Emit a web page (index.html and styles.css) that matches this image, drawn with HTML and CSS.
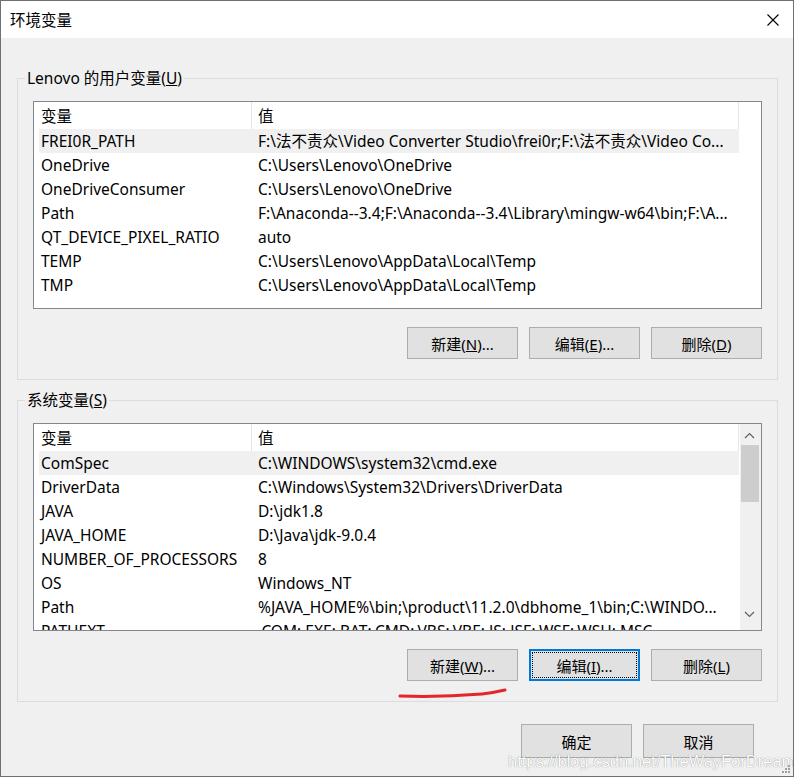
FILE: index.html
```html
<!DOCTYPE html>
<html lang="zh-CN">
<head>
    <meta charset="UTF-8">
    <title>环境变量</title>
    <link rel="stylesheet" href="styles.css">
</head>
<body>

<div class="window">

    <!-- Title bar -->
    <div class="titlebar">
        <span class="title">环境变量</span>
        <svg class="close" width="12" height="12" viewBox="0 0 12 12">
            <path d="M0.5 0.5 L11.5 11.5 M11.5 0.5 L0.5 11.5" stroke="#000" stroke-width="1.1" fill="none"/>
        </svg>
    </div>

    <div class="content">

        <!-- User variables -->
        <fieldset class="group">
            <legend>Lenovo 的用户变量(<u>U</u>)</legend>
            <div class="list">
                <div class="list-body">
                    <div class="row head"><span class="c1">变量</span><span class="c2">值</span></div>
                    <div class="row sel"><span class="c1">FREI0R_PATH</span><span class="c2">F:\法不责众\Video Converter Studio\frei0r;F:\法不责众\Video Co...</span></div>
                    <div class="row"><span class="c1">OneDrive</span><span class="c2">C:\Users\Lenovo\OneDrive</span></div>
                    <div class="row"><span class="c1">OneDriveConsumer</span><span class="c2">C:\Users\Lenovo\OneDrive</span></div>
                    <div class="row"><span class="c1">Path</span><span class="c2">F:\Anaconda--3.4;F:\Anaconda--3.4\Library\mingw-w64\bin;F:\A...</span></div>
                    <div class="row"><span class="c1">QT_DEVICE_PIXEL_RATIO</span><span class="c2">auto</span></div>
                    <div class="row"><span class="c1">TEMP</span><span class="c2">C:\Users\Lenovo\AppData\Local\Temp</span></div>
                    <div class="row"><span class="c1">TMP</span><span class="c2">C:\Users\Lenovo\AppData\Local\Temp</span></div>
                </div>
            </div>
            <div class="buttons">
                <button>新建(<u>N</u>)...</button>
                <button>编辑(<u>E</u>)...</button>
                <button>删除(<u>D</u>)</button>
            </div>
        </fieldset>

        <!-- System variables -->
        <fieldset class="group second">
            <legend>系统变量(<u>S</u>)</legend>
            <div class="list">
                <div class="list-body">
                    <div class="row head"><span class="c1">变量</span><span class="c2">值</span></div>
                    <div class="row sel"><span class="c1">ComSpec</span><span class="c2">C:\WINDOWS\system32\cmd.exe</span></div>
                    <div class="row"><span class="c1">DriverData</span><span class="c2">C:\Windows\System32\Drivers\DriverData</span></div>
                    <div class="row"><span class="c1">JAVA</span><span class="c2">D:\jdk1.8</span></div>
                    <div class="row"><span class="c1">JAVA_HOME</span><span class="c2">D:\Java\jdk-9.0.4</span></div>
                    <div class="row"><span class="c1">NUMBER_OF_PROCESSORS</span><span class="c2">8</span></div>
                    <div class="row"><span class="c1">OS</span><span class="c2">Windows_NT</span></div>
                    <div class="row"><span class="c1">Path</span><span class="c2">%JAVA_HOME%\bin;\product\11.2.0\dbhome_1\bin;C:\WINDO...</span></div>
                    <div class="row"><span class="c1">PATHEXT</span><span class="c2">.COM;.EXE;.BAT;.CMD;.VBS;.VBE;.JS;.JSE;.WSF;.WSH;.MSC</span></div>
                </div>
                <div class="scrollbar">
                    <svg width="21" height="20" viewBox="0 0 21 20">
                        <path d="M5 14 L9.5 9.5 L14 14" stroke="#606060" stroke-width="1.2" fill="none"/>
                    </svg>
                    <div class="thumb"></div>
                    <svg class="down" width="21" height="20" viewBox="0 0 21 20">
                        <path d="M5 6 L9.5 10.5 L14 6" stroke="#606060" stroke-width="1.2" fill="none"/>
                    </svg>
                </div>
            </div>
            <div class="buttons">
                <button>新建(<u>W</u>)...</button>
                <button class="focused">编辑(<u>I</u>)...</button>
                <button>删除(<u>L</u>)</button>
            </div>
        </fieldset>

        <div class="footer">
            <button class="big">确定</button>
            <button class="big">取消</button>
        </div>
    </div>

    <!-- hand drawn red mark under the button -->
    <svg class="mark" width="120" height="16" viewBox="0 0 120 16">
        <path d="M3 10 C 30 11, 60 10, 85 8 C 95 7, 102 5, 108 4" stroke="#e4262c" stroke-width="3" stroke-linecap="round" fill="none"/>
    </svg>

    <div class="watermark">https://blog.csdn.net/TheWayForDream</div>

    <svg class="grip" width="10" height="10" viewBox="0 0 10 10">
        <rect x="7" y="1" width="2" height="2" fill="#a0a0a0"/>
        <rect x="4" y="4" width="2" height="2" fill="#a0a0a0"/>
        <rect x="7" y="4" width="2" height="2" fill="#a0a0a0"/>
        <rect x="1" y="7" width="2" height="2" fill="#a0a0a0"/>
        <rect x="4" y="7" width="2" height="2" fill="#a0a0a0"/>
        <rect x="7" y="7" width="2" height="2" fill="#a0a0a0"/>
    </svg>
</div>

</body>
</html>
```

FILE: styles.css
```css
body {
    margin: 0;
    font-family: "Noto Sans", "Noto Sans CJK SC", sans-serif;
    font-size: 15.5px;
    color: #000;
    background-color: #f0f0f0;
}
.window {
    position: relative;
    width: 794px;
    height: 777px;
    box-sizing: border-box;
    border: 1px solid #707070;
    background-color: #f0f0f0;
    overflow: hidden;
}
.titlebar {
    height: 37px;
    background-color: #ffffff;
    display: flex;
    align-items: center;
    padding-left: 9px;
}
.title {
    line-height: 20px;
    margin-top: 1px;
}
.close {
    margin-left: auto;
    margin-right: 14px;
}
.content {
    padding: 30px 15px 0 16px;
}
.group {
    margin: 0;
    padding: 13px 15px 20px 15px;
    border: 1px solid #dcdcdc;
    min-width: 0;
}
.group.second {
    margin-top: 10px;
}
.group legend {
    margin-left: -8px;
    padding: 0 2px;
    line-height: 20px;
}
.list {
    display: flex;
    height: 208px;
    box-sizing: border-box;
    border: 1px solid #828790;
    background-color: #ffffff;
    overflow: hidden;
}
.list-body {
    flex: 1;
    padding-left: 5px;
    overflow: hidden;
}
.row {
    display: flex;
    width: 700px;
    height: 24px;
    line-height: 24px;
    white-space: nowrap;
}
.row.head {
    height: 27px;
    line-height: 28px;
}
.row.sel {
    background-color: #f0f0f0;
}
.c1 {
    width: 213px;
    box-sizing: border-box;
    padding-left: 2px;
    overflow: hidden;
}
.c2 {
    width: 487px;
    box-sizing: border-box;
    padding-left: 6px;
    overflow: hidden;
    text-overflow: ellipsis;
}
.head .c1,
.head .c2 {
    border-right: 1px solid #e5e5e5;
}
.scrollbar {
    width: 21px;
    display: flex;
    flex-direction: column;
    background-color: #f0f0f0;
}
.scrollbar .down {
    margin-top: auto;
    margin-bottom: 4px;
}
.thumb {
    height: 57px;
    margin: 1px 2px 0 1px;
    background-color: #cdcdcd;
}
.buttons {
    display: flex;
    justify-content: flex-end;
    gap: 11px;
    margin-top: 18px;
}
button {
    width: 111px;
    height: 32px;
    padding: 0;
    font-family: inherit;
    font-size: 15px;
    color: #000;
    background-color: #e1e1e1;
    border: 1px solid #adadad;
    border-radius: 0;
}
button.focused {
    border-color: #0078d7;
    box-shadow: inset 0 0 0 1px #0078d7;
    outline: 1px dotted #000;
    outline-offset: -4px;
}
.footer {
    display: flex;
    justify-content: flex-end;
    gap: 11px;
    margin-top: 22px;
    padding-right: 24px;
}
button.big {
    height: 34px;
}
.mark {
    position: absolute;
    left: 396px;
    top: 685px;
}
.watermark {
    position: absolute;
    left: 507px;
    top: 751px;
    font-family: "Liberation Sans", Arial, sans-serif;
    font-size: 16.5px;
    line-height: 18px;
    white-space: nowrap;
    color: #ffffff;
    text-shadow: 0 0 1px rgba(0, 0, 0, 0.55);
}
.grip {
    position: absolute;
    right: 2px;
    bottom: 2px;
}
```
